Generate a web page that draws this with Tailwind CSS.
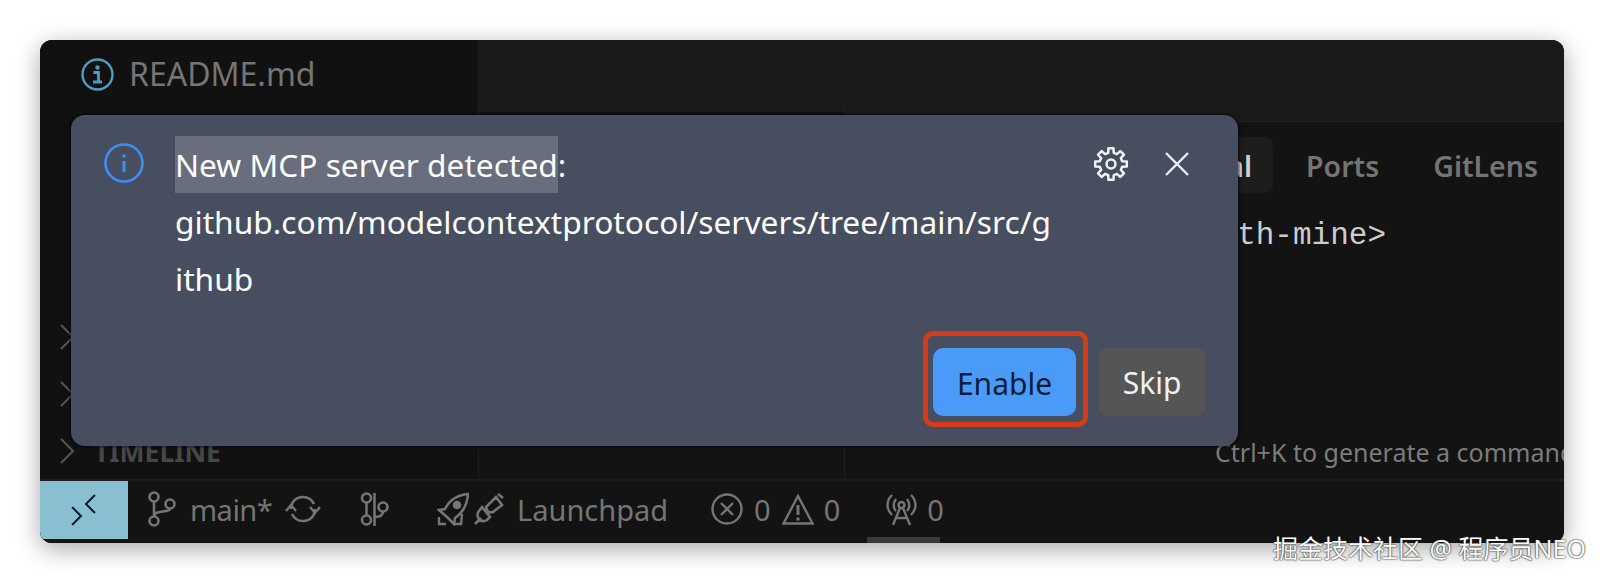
<!DOCTYPE html>
<html lang="en">
<head>
<meta charset="UTF-8">
<title>New MCP server detected</title>
<script src="https://cdn.jsdelivr.net/npm/@tailwindcss/browser@4"></script>
</head>
<body class="bg-white font-['Noto_Sans','Open_Sans',sans-serif] overflow-hidden">
<div class="relative h-[583px] w-[1604px] pt-[40px] pl-[40px]">
  <!-- Editor window -->
  <div class="relative flex h-[503px] w-[1524px] flex-col overflow-hidden rounded-[12px] bg-[#131313] shadow-[0_6px_24px_rgba(0,0,0,0.35)]">
    <div class="flex h-[439px]">
      <!-- Sidebar -->
      <div class="flex w-[439px] shrink-0 flex-col justify-between border-r border-[#1e1e1e] bg-[#111111]">
        <div class="flex h-[68px] items-center gap-[15px] pl-[41px]">
          <svg class="h-[33px] w-[33px]" viewBox="0 0 33 33" fill="none" stroke="#4f9dbf" stroke-width="2.4"><circle cx="16.5" cy="16.5" r="15"/><circle cx="16.5" cy="9.5" r="2.2" fill="#4f9dbf" stroke="none"/><path d="M12.5 14.5h5v9M12 24h9" stroke-width="2.8"/></svg>
          <span class="text-[32px] leading-none text-[#757575]">README.md</span>
        </div>
        <div class="flex flex-col">
          <div class="flex h-[57px] items-center pl-[20px]"><svg class="h-[26px] w-[14px]" viewBox="0 0 14 26" fill="none" stroke="#555" stroke-width="2"><path d="M1 1l12 12L1 25"/></svg></div>
          <div class="flex h-[57px] items-center pl-[20px]"><svg class="h-[26px] w-[14px]" viewBox="0 0 14 26" fill="none" stroke="#555" stroke-width="2"><path d="M1 1l12 12L1 25"/></svg></div>
          <div class="flex h-[57px] items-center gap-[20px] pl-[20px]">
            <svg class="h-[26px] w-[14px]" viewBox="0 0 14 26" fill="none" stroke="#555" stroke-width="2"><path d="M1 1l12 12L1 25"/></svg>
            <span class="pt-[4px] text-[26.500px] leading-none font-bold text-[#474747]">TIMELINE</span>
          </div>
        </div>
      </div>
      <!-- Editor column -->
      <div class="flex w-[366px] shrink-0 flex-col border-r border-[#1e1e1e]">
        <div class="h-[72px] bg-[#1a1a1a]"></div>
      </div>
      <!-- Panel -->
      <div class="flex min-w-0 flex-1 flex-col">
        <div class="h-[82px] border-b border-[#202020] bg-[#1a1a1a]"></div>
        <div class="flex justify-end gap-3 pt-[15px] pr-[5px]">
          <span class="flex h-[56px] items-center rounded-[8px] bg-[#1d1d1d] px-[21px] pt-[2px] text-[28.500px] font-semibold text-[#d0d0d0]">Terminal</span>
          <span class="flex h-[56px] items-center px-[21px] pt-[2px] text-[28.500px] font-semibold text-[#747474]">Ports</span>
          <span class="flex h-[56px] items-center px-[21px] pt-[2px] text-[28.500px] font-semibold text-[#747474]">GitLens</span>
        </div>
        <div class="flex justify-end pt-[23px] pr-[178px] font-['Liberation_Mono',monospace] text-[31px] leading-[40px] text-[#cccccc]">&lt;path-with-mine&gt;</div>
        <div class="mt-auto mb-[6px] flex h-[40px] items-center overflow-hidden pl-[370px] text-[25px] whitespace-nowrap text-[#7c7c7c]">Ctrl+K to generate a command</div>
      </div>
    </div>
    <!-- Status bar -->
    <div class="flex h-[64px] border-t-2 border-[#1f1f1f] bg-[#131313] text-[29px] leading-none text-[#757575]">
      <div class="flex h-[58px] w-[88px] items-center justify-center bg-[#8abfd2]">
        <svg class="h-[32px] w-[26px]" viewBox="0 0 26 32" fill="none" stroke="#10192e" stroke-width="2"><path d="M1 13l9 9-9 9M24 1l-9 9 9 9"/></svg>
      </div>
      <div class="flex h-[56px] items-center">
        <svg class="ml-[20px] h-[36px] w-[28px]" viewBox="0 0 28 36" fill="none" stroke="#757575" stroke-width="2.6"><circle cx="6" cy="6" r="4.5"/><circle cx="6" cy="30" r="4.5"/><circle cx="22" cy="13" r="4.5"/><path d="M6 10.5v15M6 25c0-6 16-3 16-7.5"/></svg>
        <span class="ml-[14px] w-[80px] tracking-[-0.5px]">main*</span>
        <svg class="ml-[15px] h-[30px] w-[36px]" viewBox="0 0 36 30" fill="none" stroke="#757575" stroke-width="2.6"><path d="M6 15C6 8 11 3 18 3c5 0 9 3 11 7M30 15c0 7-5 12-12 12-5 0-9-3-11-7"/><path d="M1 17l5-6 5 6M25 13l5 6 5-6" stroke-width="2.4"/></svg>
        <svg class="ml-[39px] h-[34px] w-[29px]" viewBox="0 0 29 34" fill="none" stroke="#757575" stroke-width="2.6"><circle cx="6.5" cy="6" r="4.5"/><circle cx="6.5" cy="28" r="4.5"/><circle cx="23" cy="15" r="4.5"/><path d="M14.5 1v33M6.5 10.500v13M14.500 25c6 0 8.500-2 8.500-5.500"/></svg>
        <svg class="ml-[48px] h-[34px] w-[32px]" viewBox="0 0 32 34" fill="none" stroke="#757575" stroke-width="2.6"><path d="M31 2C20 3 12 9 8 17l-6 1 8 7 7 7 1-6c6-4 12-12 13-24z"/><circle cx="20" cy="13" r="3" fill="#757575"/><path d="M2 25v7h7M25 22l-1 10h-7" stroke-width="2.4"/></svg>
        <svg class="ml-[5px] h-[32px] w-[30px]" viewBox="0 0 30 32" fill="none" stroke="#757575" stroke-width="2.6"><path d="M1 31l6-6M24 1l5 4M22 4l6 8-9 7c-3 1-5 0-6-2l-1-3zM8 14l8 10-3 3c-3 2-6 1-8-1s-2-6 0-8z"/></svg>
        <span class="ml-[13px]">Launchpad</span>
        <svg class="ml-[43px] h-[32px] w-[32px]" viewBox="0 0 32 32" fill="none" stroke="#757575" stroke-width="2.4"><circle cx="16" cy="16" r="14.500"/><path d="M10 10l12 12M22 10L10 22"/></svg>
        <span class="ml-[11px]">0</span>
        <svg class="ml-[11px] h-[31px] w-[32px]" viewBox="0 0 32 31" fill="none" stroke="#757575" stroke-width="2.4"><path d="M16 2L1.500 29.500h29z"/><path d="M16 11v10M16 23.500v3" stroke-width="3"/></svg>
        <span class="ml-[10px]">0</span>
        <svg class="ml-[46px] h-[33px] w-[31px]" viewBox="0 0 31 33" fill="none" stroke="#757575" stroke-width="2.4"><path d="M6 2C0 8 0 16 6 22M25 2c6 6 6 14 0 20M10 6c-3 4-3 9 0 12M21 6c3 4 3 9 0 12"/><circle cx="15.500" cy="12" r="3"/><path d="M14 15L7 32M17 15l7 17M10 25h11"/></svg>
        <span class="ml-[10px]">0</span>
      </div>
    </div>
    <div class="absolute bottom-0 left-[827px] h-[6px] w-[73px] bg-[#3a3a3a]"></div>

    <!-- Notification dialog -->
    <div class="absolute top-[75px] left-[31px] flex h-[331px] w-[1167px] flex-col justify-between rounded-[14px] bg-[#474e5f] pt-[21px] pr-[32px] pb-[30px] shadow-[0_0_0_2px_rgba(0,0,0,0.25),0_0_6px_rgba(0,0,0,0.3)]">
      <div class="flex text-[31.700px] leading-[57px] text-white">
        <svg class="mt-[7px] ml-[33px] h-[40px] w-[40px] shrink-0" viewBox="0 0 40 40" fill="none" stroke="#3d8ff5" stroke-width="2.6"><circle cx="20" cy="20" r="18.500"/><circle cx="20" cy="13" r="1.800" fill="#3d8ff5" stroke="none"/><path d="M20 18v11" stroke-width="3"/></svg>
        <div class="ml-[31px] w-[890px] break-all">
          <span class="inline-block bg-[#686e7c]">New MCP server detected</span>:<br>github.com/modelcontextprotocol/servers/tree/main/src/g<br>ithub
        </div>
        <div class="mr-[17px] ml-auto flex items-start gap-[36px]">
          <svg class="mt-[10px] h-[36px] w-[36px]" viewBox="0 0 36 36" fill="none" stroke="#eef0f4" stroke-width="2.500" stroke-linejoin="round"><path d="M15.220 6.840L15.500 2.200H20.500L20.780 6.840L23.920 8.140L27.400 5.060L30.940 8.600L27.860 12.080L29.160 15.220L33.800 15.500V20.500L29.160 20.780L27.860 23.920L30.940 27.400L27.400 30.940L23.920 27.860L20.780 29.160L20.500 33.800H15.500L15.220 29.160L12.080 27.860L8.600 30.940L5.060 27.400L8.140 23.920L6.840 20.780L2.200 20.500V15.500L6.840 15.220L8.140 12.080L5.060 8.600L8.600 5.060L12.080 8.140Z"/><circle cx="18" cy="18" r="4.500"/></svg>
          <svg class="mt-[16px] h-[24px] w-[24px]" viewBox="0 0 24 24" fill="none" stroke="#eef0f4" stroke-width="2.400"><path d="M1 1l22 22M23 1L1 23"/></svg>
        </div>
      </div>
      <div class="flex justify-end gap-[22px]">
        <div class="relative">
          <button class="h-[68px] w-[143px] rounded-[10px] bg-[#4a9bf8] pt-[2px] text-[30px] text-[#0d1c3a]">Enable</button>
          <div class="absolute -top-[17px] -right-[12px] -bottom-[11px] -left-[10px] rounded-[10px] border-[5px] border-[#d33d1b]"></div>
        </div>
        <button class="h-[68px] w-[108px] rounded-[10px] bg-[#555555] text-[30px] text-[#f0f0f0]">Skip</button>
      </div>
    </div>
  </div>
  <!-- Watermark -->
  <div class="absolute top-[530px] left-[1273px] font-['Noto_Sans','Noto_Sans_CJK_SC',sans-serif] text-[25px] leading-[36px] whitespace-nowrap text-white [text-shadow:0_0_2px_#222,0_0_1px_#222]">掘金技术社区 @ 程序员NEO</div>
</div>
</body>
</html>
